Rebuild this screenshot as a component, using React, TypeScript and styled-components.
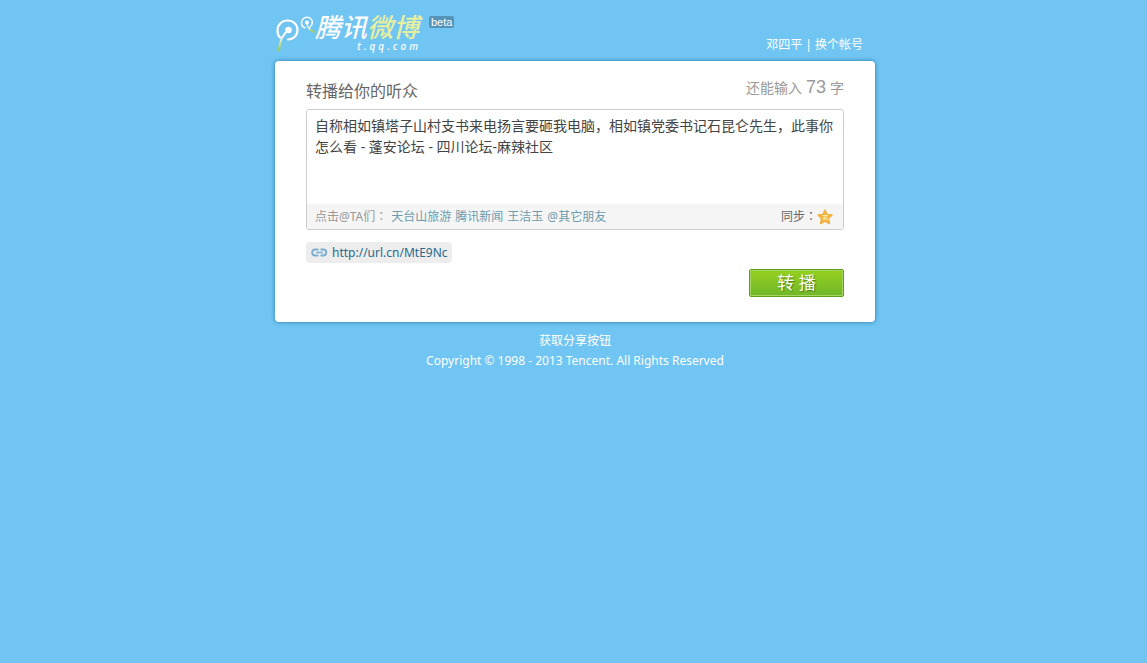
import React, { useState } from "react";
import styled, { createGlobalStyle } from "styled-components";

const GlobalStyle = createGlobalStyle`
  *, *::before, *::after { box-sizing: border-box; }
  body {
    margin: 0;
    background: #71c5f2;
    font: 12px/20px "Noto Sans", "Noto Sans CJK SC", sans-serif;
    color: #666;
  }
  a { text-decoration: none; }
  button, textarea { font-family: inherit; }
`;

const Page = styled.div`
  max-width: 603px;
  margin: 0 auto;
  padding-left: 3px;
`;

const Header = styled.header`
  display: flex;
  justify-content: space-between;
  height: 61px;
  padding-right: 12px;
`;

const Brand = styled.a`
  display: flex;
  align-items: flex-start;
  padding-top: 14px;
  color: #fff;
`;

const Mark = styled.svg`
  display: block;
  width: 40px;
  height: 40px;
`;

const BrandText = styled.span`
  display: flex;
  flex-direction: column;
  width: 108px;
  font-style: italic;
`;

const BrandName = styled.span`
  font-size: 26px;
  font-weight: 500;
  line-height: 27px;
  white-space: nowrap;
`;

const BrandAccent = styled.span`
  color: #e6efa0;
`;

const BrandDomain = styled.span`
  padding-right: 2px;
  font-size: 10px;
  font-weight: 500;
  line-height: 10px;
  letter-spacing: 3px;
  text-align: right;
`;

const Beta = styled.span`
  margin: 2px 0 0 6px;
  padding: 0 2px;
  border-radius: 2px;
  background: #5594b8;
  font: 11px/12px "Liberation Sans", sans-serif;
`;

const Account = styled.nav`
  display: flex;
  gap: 3px;
  align-self: flex-end;
  padding-bottom: 6px;
  color: #fff;
`;

const PlainLink = styled.a`
  color: #fff;
`;

const Card = styled.form`
  padding: 17px 31px 25px;
  border-radius: 4px;
  background: #fff;
  box-shadow: 0 0 4px #2878a8;
`;

const TitleRow = styled.div`
  display: flex;
  justify-content: space-between;
  height: 31px;
`;

const Title = styled.label`
  font-size: 16px;
  line-height: 26px;
`;

const Counter = styled.p`
  margin: 0;
  color: #999;
  font-size: 14px;
  line-height: 18px;
`;

const Count = styled.span`
  margin: 0 4px;
  font: 18px/18px "Liberation Sans", sans-serif;
`;

const Editor = styled.div`
  overflow: hidden;
  border: 1px solid #ccc;
  border-radius: 3px;
`;

const Message = styled.textarea`
  display: block;
  width: 100%;
  height: 94px;
  padding: 5px 8px;
  border: 0;
  outline: 0;
  resize: none;
  overflow: hidden;
  background: #fff;
  color: #444;
  font-size: 14px;
  line-height: 21px;
`;

const Toolbar = styled.div`
  display: flex;
  justify-content: space-between;
  align-items: center;
  height: 25px;
  padding: 0 10px 0 8px;
  background: #f5f5f5;
`;

const Mentions = styled.div`
  display: flex;
  align-items: baseline;
  gap: 4px;
  color: #999;
`;

const Mention = styled.a`
  color: #6c9bad;
`;

const Sync = styled.div`
  display: flex;
  align-items: center;
`;

/* The traditional face sets the full-width colon in the middle of its square. */
const Colon = styled.span`
  font-family: "Noto Sans CJK TC", sans-serif;
`;

const SyncButton = styled.button`
  display: block;
  padding: 0;
  border: 0;
  background: none;
  cursor: pointer;
`;

const Icon = styled.svg`
  display: block;
`;

const Attachment = styled.a`
  display: inline-flex;
  align-items: center;
  gap: 4px;
  height: 21px;
  margin-top: 12px;
  padding: 0 4px 0 5px;
  border-radius: 4px;
  background: #ededed;
  color: #2a6b8c;
`;

const Actions = styled.div`
  display: flex;
  justify-content: flex-end;
  margin-top: 5px;
`;

const Submit = styled.button`
  width: 95px;
  height: 28px;
  padding: 0;
  border: 1px solid #5f9e1c;
  border-radius: 2px;
  background: linear-gradient(#96d01f, #6fb62a);
  box-shadow: inset 0 0 0 1px #a5d660;
  color: #fff;
  font-size: 17px;
  line-height: 26px;
  text-shadow: 1px 1px 1px #4c8512;
  cursor: pointer;
`;

const Footer = styled.footer`
  padding-top: 9px;
  color: #fff;
  text-align: center;
`;

const Line = styled.p`
  margin: 0;
`;

const friends = ["天台山旅游", "腾讯新闻", "王洁玉", "@其它朋友"];

const initialText =
  "自称相如镇塔子山村支书来电扬言要砸我电脑，相如镇党委书记石昆仑先生，此事你怎么看 - 蓬安论坛 - 四川论坛-麻辣社区";

function BrandMark() {
  return (
    <Mark viewBox="0 0 40 40" fill="none" aria-hidden="true">
      <defs>
        <linearGradient id="stem" gradientUnits="userSpaceOnUse" x1="0" y1="16" x2="0" y2="37">
          <stop offset="0.3" stopColor="#fff" />
          <stop offset="0.9" stopColor="#9fcf45" />
        </linearGradient>
      </defs>
      <path
        d="M5 23.500C3 21.500 2.500 19 2.500 16.500C2.500 10.500 7 6.500 12.500 6.500C18.500 6.500 22.500 10.500 22.500 16C22.500 21.500 18.500 25.500 13 25.500"
        stroke="#fff"
        strokeWidth="2.2"
        strokeLinecap="round"
      />
      <path d="M13.500 16C8 20 4.500 27 4 36.500" stroke="url(#stem)" strokeWidth="2" strokeLinecap="round" />
      <circle cx="13.500" cy="16" r="3.200" fill="#fff" />
      <path
        d="M30 13.800C27.500 13 26.500 11 26.500 8.800C26.500 5.500 29 3.200 32 3.200C35 3.200 37.300 5.500 37.300 8.500C37.300 10.500 36.500 12 35 13"
        stroke="#fff"
        strokeWidth="1.500"
        strokeLinecap="round"
      />
      <path d="M32 8.500C32 12 34 15 36.500 16.500" stroke="#fff" strokeWidth="1.300" strokeLinecap="round" />
      <path d="M36 16L39 18" stroke="#a5cf58" strokeWidth="1.800" strokeLinecap="round" />
      <circle cx="32" cy="8.500" r="2" fill="#fff" />
    </Mark>
  );
}

function LinkIcon() {
  return (
    <Icon width="17" height="11" viewBox="0 0 17 11" fill="none" stroke="#7eb0d2" strokeWidth="2" aria-hidden="true">
      <path d="M7.500 2.500H4.200A3 3 0 0 0 4.200 8.500H7.500" />
      <path d="M9.500 2.500H12.200A3 3 0 0 1 12.200 8.500H9.500" />
      <path d="M5 5.500H12" strokeWidth="1.600" />
    </Icon>
  );
}

function StarIcon() {
  return (
    <Icon width="16" height="16" viewBox="0 0 17 17" aria-hidden="true">
      <path
        d="M8.500 1L10.700 5.700L16 6.300L12.200 10L13.200 15.500L8.500 13L3.800 15.500L4.800 10L1 6.300L6.300 5.700Z"
        fill="#f3b840"
        stroke="#f0b040"
        strokeWidth="1.400"
        strokeLinejoin="round"
      />
      <path d="M5.800 6.900H10.600L6.800 10.200Q9.500 11 12 10.200" fill="none" stroke="#fbe6ae" strokeWidth="1.200" />
    </Icon>
  );
}

export default function App() {
  const [text, setText] = useState(initialText);
  const remaining = 73 + initialText.length - text.length;

  return (
    <>
      <GlobalStyle />
      <Page>
        <Header>
          <Brand href="#">
            <BrandMark />
            <BrandText>
              <BrandName>
                腾讯<BrandAccent>微博</BrandAccent>
              </BrandName>
              <BrandDomain>t.qq.com</BrandDomain>
            </BrandText>
            <Beta>beta</Beta>
          </Brand>
          <Account>
            <PlainLink href="#">邓四平</PlainLink>
            <span>|</span>
            <PlainLink href="#">换个帐号</PlainLink>
          </Account>
        </Header>
        <Card onSubmit={(e) => e.preventDefault()}>
          <TitleRow>
            <Title htmlFor="message">转播给你的听众</Title>
            <Counter>
              还能输入<Count>{remaining}</Count>字
            </Counter>
          </TitleRow>
          <Editor>
            <Message id="message" spellCheck={false} value={text} onChange={(e) => setText(e.target.value)} />
            <Toolbar>
              <Mentions>
                <span>
                  点击@TA们<Colon>：</Colon>
                </span>
                {friends.map((name) => (
                  <Mention key={name} href="#">
                    {name}
                  </Mention>
                ))}
              </Mentions>
              <Sync>
                <span id="sync">
                  同步<Colon>：</Colon>
                </span>
                <SyncButton type="button" aria-labelledby="sync">
                  <StarIcon />
                </SyncButton>
              </Sync>
            </Toolbar>
          </Editor>
          <Attachment href="#">
            <LinkIcon />
            http://url.cn/MtE9Nc
          </Attachment>
          <Actions>
            <Submit type="submit">转 播</Submit>
          </Actions>
        </Card>
        <Footer>
          <Line>
            <PlainLink href="#">获取分享按钮</PlainLink>
          </Line>
          <Line>Copyright © 1998 - 2013 Tencent. All Rights Reserved</Line>
        </Footer>
      </Page>
    </>
  );
}
